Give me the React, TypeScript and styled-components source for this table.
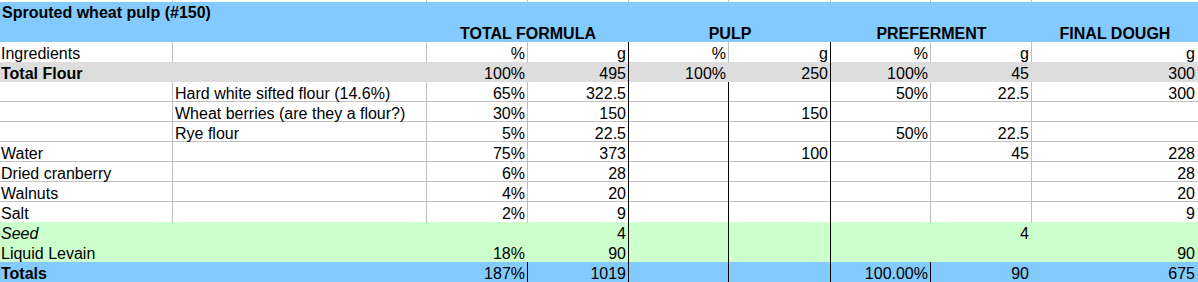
import styled, { createGlobalStyle } from 'styled-components';

type Fill = 'white' | 'gray' | 'green' | 'blue';
type Line = 'none' | 'gray' | 'black';

interface RowData {
  fill: Fill;
  label: string;
  labelStyle?: 'bold' | 'italic';
  note?: string;
  values: string[]; // columns C..I
  bottomLine?: boolean;
  blackE?: boolean;
  grayE?: boolean;
  totals?: boolean;
}

const COLUMNS = [173, 254, 101, 101, 100, 102, 100, 101, 166];
const GRID = COLUMNS.map(w => `${w}px`).join(' ');

const FILLS: Record<Fill, string> = {
  white: '#ffffff',
  gray: '#dddddd',
  green: '#ccffcc',
  blue: '#83caff',
};

const GRIDLINE = '#c0c0c0';

const rows: RowData[] = [
  { fill: 'white', label: 'Ingredients', values: ['%', 'g', '%', 'g', '%', 'g', 'g'], grayE: true },
  { fill: 'gray', label: 'Total Flour', labelStyle: 'bold', values: ['100%', '495', '100%', '250', '100%', '45', '300'] },
  { fill: 'white', label: '', note: 'Hard white sifted flour (14.6%)', values: ['65%', '322.5', '', '', '50%', '22.5', '300'], bottomLine: true, blackE: true },
  { fill: 'white', label: '', note: 'Wheat berries (are they a flour?)', values: ['30%', '150', '', '150', '', '', ''], bottomLine: true, blackE: true },
  { fill: 'white', label: '', note: 'Rye flour', values: ['5%', '22.5', '', '', '50%', '22.5', ''], bottomLine: true, blackE: true },
  { fill: 'white', label: 'Water', values: ['75%', '373', '', '100', '', '45', '228'], bottomLine: true, blackE: true },
  { fill: 'white', label: 'Dried cranberry', values: ['6%', '28', '', '', '', '', '28'], bottomLine: true, blackE: true },
  { fill: 'white', label: 'Walnuts', values: ['4%', '20', '', '', '', '', '20'], bottomLine: true, blackE: true },
  { fill: 'white', label: 'Salt', values: ['2%', '9', '', '', '', '', '9'], blackE: true },
  { fill: 'green', label: 'Seed', labelStyle: 'italic', values: ['', '4', '', '', '', '4', ''], blackE: true },
  { fill: 'green', label: 'Liquid Levain', values: ['18%', '90', '', '', '', '', '90'], blackE: true },
  { fill: 'blue', label: 'Totals', labelStyle: 'bold', values: ['187%', '1019', '', '', '100.00%', '90', '675'], blackE: true, totals: true },
];

const lineFor = (row: RowData, col: number): Line => {
  if (col === 3 || col === 5) return 'black';
  if (col === 4 && row.blackE) return 'black';
  if (row.totals && (col === 2 || col === 6)) return 'black';
  if (row.fill !== 'white' || col === 8) return 'none';
  if (col === 4 && !row.grayE && !row.blackE) return 'none';
  return 'gray';
};

const GlobalStyle = createGlobalStyle`
  body {
    margin: 0;
    background: #ffffff;
    font-family: 'Liberation Sans', Arial, sans-serif;
    color: #000000;
  }
`;

const Sheet = styled.div`
  width: 1198px;
  height: 282px;
  overflow: hidden;
  font-size: 16px;
`;

const TopStrip = styled.div`
  display: grid;
  grid-template-columns: ${GRID};
  height: 2px;
`;

const StripCell = styled.div<{ $line: boolean }>`
  border-right: 1px solid ${p => (p.$line ? GRIDLINE : 'transparent')};
`;

const Banner = styled.div`
  background: ${FILLS.blue};
  height: 40px;
  display: grid;
  grid-template-rows: 20px 20px;
`;

const Title = styled.div`
  font-weight: bold;
  line-height: 19px;
  padding: 1px 2px 0;
  white-space: nowrap;
`;

const HeaderRow = styled.div`
  display: grid;
  grid-template-columns: ${GRID};
`;

const HeaderLabel = styled.div<{ $start: number; $span: number }>`
  grid-column: ${p => p.$start} / span ${p => p.$span};
  font-weight: bold;
  text-align: center;
  line-height: 19px;
  padding-top: 2px;
  white-space: nowrap;
`;

const Row = styled.div<{ $fill: Fill; $line: boolean }>`
  display: grid;
  grid-template-columns: ${GRID};
  height: 20px;
  background: ${p => FILLS[p.$fill]};
  box-sizing: border-box;
  border-bottom: 1px solid ${p => (p.$line ? GRIDLINE : 'transparent')};
`;

const Cell = styled.div<{ $line: Line; $right?: boolean; $weight?: 'bold' | 'italic' }>`
  box-sizing: border-box;
  padding: 2px 2px 0 2px;
  line-height: 19px;
  white-space: nowrap;
  text-align: ${p => (p.$right ? 'right' : 'left')};
  font-weight: ${p => (p.$weight === 'bold' ? 'bold' : 'normal')};
  font-style: ${p => (p.$weight === 'italic' ? 'italic' : 'normal')};
  border-right: 1px solid
    ${p => (p.$line === 'black' ? '#000000' : p.$line === 'gray' ? GRIDLINE : 'transparent')};
`;

const LabelCell = styled(Cell)`
  padding-left: 1px;
`;

const headers = [
  { text: 'TOTAL FORMULA', start: 3, span: 2 },
  { text: 'PULP', start: 5, span: 2 },
  { text: 'PREFERMENT', start: 7, span: 2 },
  { text: 'FINAL DOUGH', start: 9, span: 1 },
];

export default function App() {
  return (
    <>
      <GlobalStyle />
      <Sheet>
        <TopStrip>
          {COLUMNS.map((_, i) => (
            <StripCell key={i} $line={i < 8} />
          ))}
        </TopStrip>
        <Banner>
          <Title>Sprouted wheat pulp (#150)</Title>
          <HeaderRow>
            {headers.map(h => (
              <HeaderLabel key={h.text} $start={h.start} $span={h.span}>
                {h.text}
              </HeaderLabel>
            ))}
          </HeaderRow>
        </Banner>
        {rows.map((row, r) => (
          <Row key={r} $fill={row.fill} $line={!!row.bottomLine}>
            <LabelCell $line={lineFor(row, 0)} $weight={row.labelStyle}>
              {row.label}
            </LabelCell>
            <Cell $line={lineFor(row, 1)}>{row.note}</Cell>
            {row.values.map((v, c) => (
              <Cell key={c} $line={lineFor(row, c + 2)} $right>
                {v}
              </Cell>
            ))}
          </Row>
        ))}
      </Sheet>
    </>
  );
}
